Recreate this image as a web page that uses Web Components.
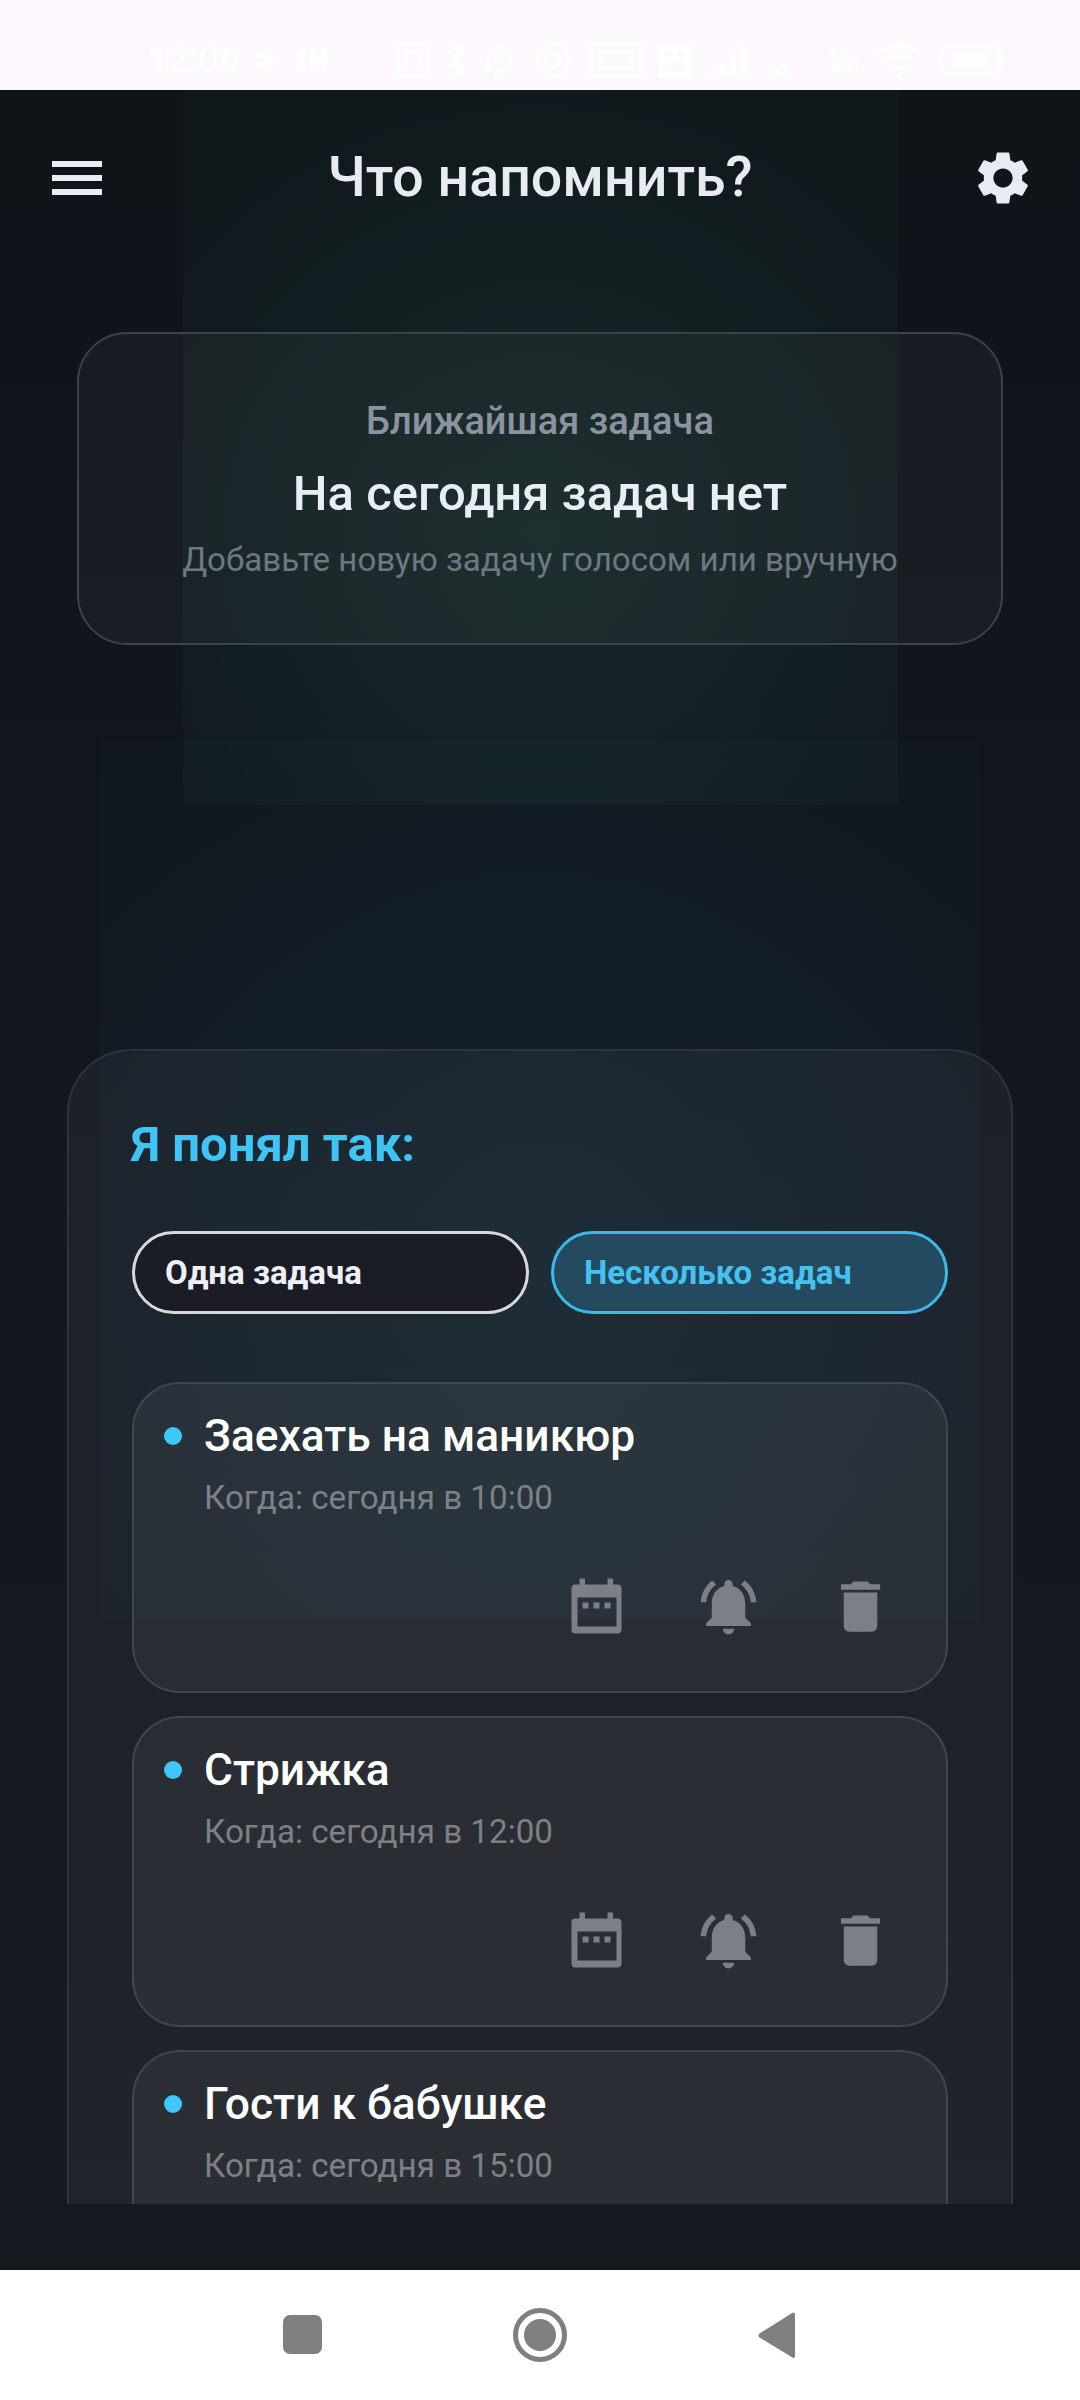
<!DOCTYPE html>
<html lang="ru">
<head>
<meta charset="utf-8">
<title>Что напомнить?</title>
<style>
  html, body { margin: 0; padding: 0; }
  body { width: 1080px; height: 2400px; overflow: hidden; font-family: Roboto, "Noto Sans", sans-serif; }
  app-screen { height: 2400px; }
</style>
</head>
<body>
<app-screen>
  <status-bar slot="status"></status-bar>
  <app-header title="Что напомнить?"></app-header>
  <next-task label="Ближайшая задача" title="На сегодня задач нет" hint="Добавьте новую задачу голосом или вручную"></next-task>
  <review-sheet heading="Я понял так:">
    <mode-pill slot="modes">Одна задача</mode-pill>
    <mode-pill slot="modes" selected>Несколько задач</mode-pill>
    <task-item title="Заехать на маникюр" when="Когда: сегодня в 10:00"></task-item>
    <task-item title="Стрижка" when="Когда: сегодня в 12:00"></task-item>
    <task-item title="Гости к бабушке" when="Когда: сегодня в 15:00"></task-item>
  </review-sheet>
  <nav-bar slot="nav"></nav-bar>
</app-screen>

<script>
// каркас экрана: фон со свечениями, контент, нижняя навигация
class AppScreen extends HTMLElement {
  connectedCallback() {
    this.attachShadow({ mode: 'open' }).innerHTML = `
      <style>
        :host { display: flex; flex-direction: column; width: 1080px; }
        .app {
          height: 2180px;
          color: #e8ebf2;
          background:
            radial-gradient(circle farthest-corner at 50% 62%, rgba(26,64,56,.44), rgba(26,64,56,.27) 48%, rgba(26,64,56,.17) 65%, rgba(26,64,56,.1) 80%) 183px 0 / 715px 715px no-repeat,
            radial-gradient(circle farthest-corner at 50% 60%, rgba(20,70,85,.27), rgba(20,70,85,.14) 51%, rgba(20,70,85,.05) 80%, rgba(20,70,85,.03)) 100px 650px / 880px 880px no-repeat,
            linear-gradient(#0f1419, #12161e 40%, #151a21);
        }
      </style>
      <slot name="status"></slot>
      <div class="app"><slot></slot></div>
      <slot name="nav"></slot>`;
  }
}

class StatusBar extends HTMLElement {
  connectedCallback() {
    this.attachShadow({ mode: 'open' }).innerHTML = `
      <style>
        :host {
          display: flex; align-items: center; box-sizing: border-box;
          height: 90px; padding: 30px 75px 0 148px;
          background: #fdf7fe; color: #fff;
          font: 500 36px Roboto, sans-serif;
        }
        .left, .right { display: flex; align-items: center; }
        .left { gap: 16px; flex: 1; }
        .right { gap: 17px; }
        svg { display: block; }
        .small { font-size: 15px; font-weight: 700; line-height: 16px; }
      </style>
      <div class="left">
        <span>12:06</span>
        <svg width="26" height="26" viewBox="0 0 24 24" fill="#fff"><path d="M2 21 23 12 2 3v7l15 2-15 2z"/></svg>
        <svg width="36" height="26" viewBox="0 0 36 26" fill="#fff"><path d="M0 2h8v22H0zM12 2h4l5 10 5-10h4v22h-5V12l-4 8-4-8v12h-5z"/></svg>
      </div>
      <div class="right">
        <svg width="34" height="36" viewBox="0 0 34 36" fill="none" stroke="#fff" stroke-width="3"><rect x="2" y="2" width="30" height="32" rx="3"/><path d="M10 26V10h14v16"/></svg>
        <svg width="18" height="36" viewBox="0 0 18 36" fill="none" stroke="#fff" stroke-width="3"><path d="M2 10l14 16-7 7V3l7 7L2 26"/></svg>
        <svg width="34" height="36" viewBox="0 0 34 36" fill="none" stroke="#fff" stroke-width="3"><path d="M6 28V16a11 11 0 0 1 22 0v12zM3 30 31 4M13 33h8"/></svg>
        <svg width="40" height="38" viewBox="0 0 40 38" fill="none" stroke="#fff" stroke-width="3.5"><circle cx="20" cy="19" r="16"/><circle cx="20" cy="19" r="7"/></svg>
        <svg width="52" height="36" viewBox="0 0 52 36" fill="none" stroke="#fff" stroke-width="4"><rect x="2" y="2" width="48" height="32"/><rect x="10" y="10" width="32" height="16"/></svg>
        <svg width="32" height="36" viewBox="0 0 32 36" fill="#fff"><path d="M0 3h32v33H0zM6 9v6h8V9zm12 0v6h8V9zM6 21v9h20v-9z" fill-rule="evenodd"/></svg>
        <svg width="40" height="32" viewBox="0 0 40 32" fill="#fff"><path d="M2 26h6v6H2zM12 20h6v12h-6zM22 10h6v22h-6zM32 2h6v30h-6z"/></svg>
        <svg width="16" height="12" viewBox="0 0 16 12" fill="#fff" style="margin:20px 24px 0 8px"><path d="M0 4h6v8H0zM9 0h6v12H9z"/></svg>
        <div class="small">Vo<br>WiFi</div>
        <svg width="46" height="38" viewBox="0 0 46 38" fill="none" stroke="#fff" stroke-width="4"><path d="M2 13a30 30 0 0 1 42 0M9 21a20 20 0 0 1 28 0M16 29a10 10 0 0 1 14 0"/><circle cx="23" cy="35" r="3" fill="#fff" stroke="none"/></svg>
        <svg width="66" height="32" viewBox="0 0 66 32" fill="none" stroke="#fff" stroke-width="3"><rect x="2" y="2" width="58" height="28" rx="7"/><path d="M63 11v10"/><rect x="14" y="9" width="34" height="14" fill="#fff" stroke="none"/></svg>
      </div>`;
  }
}

class AppHeader extends HTMLElement {
  connectedCallback() {
    this.attachShadow({ mode: 'open' }).innerHTML = `
      <style>
        :host {
          display: grid; grid-template-columns: 1fr auto 1fr; align-items: center;
          box-sizing: border-box; height: 176px; padding: 0 45px 0 52px;
          color: #e8ebf3;
        }
        .burger { display: flex; flex-direction: column; gap: 8px; width: 50px; }
        .burger i { display: block; height: 6px; background: currentColor; }
        h1 { margin: 0; font: 500 55.500px/60px Roboto, sans-serif; transform: translateX(-3.500px); }
        svg { display: block; fill: currentColor; justify-self: end; }
      </style>
      <div class="burger"><i></i><i></i><i></i></div>
      <h1>${this.getAttribute('title')}</h1>
      <svg width="64" height="64" viewBox="0 0 24 24"><path d="M19.14 12.94c.04-.3.06-.61.06-.94 0-.32-.02-.64-.07-.94l2.03-1.58c.18-.14.23-.41.12-.61l-1.92-3.32c-.12-.22-.37-.29-.59-.22l-2.39.96c-.5-.38-1.03-.7-1.62-.94l-.36-2.54c-.04-.24-.24-.41-.48-.41h-3.84c-.24 0-.43.17-.47.41l-.36 2.54c-.59.24-1.13.57-1.62.94l-2.39-.96c-.22-.08-.47 0-.59.22L2.74 8.87c-.12.21-.08.47.12.61l2.03 1.58c-.05.3-.09.63-.09.94s.02.64.07.94l-2.03 1.58c-.18.14-.23.41-.12.61l1.92 3.32c.12.22.37.29.59.22l2.39-.96c.5.38 1.03.7 1.62.94l.36 2.54c.05.24.24.41.48.41h3.84c.24 0 .44-.17.47-.41l.36-2.54c.59-.24 1.13-.56 1.62-.94l2.39.96c.22.08.47 0 .59-.22l1.92-3.32c.12-.22.07-.47-.12-.61l-2.01-1.58zM12 15.6c-1.98 0-3.6-1.62-3.6-3.6s1.62-3.6 3.6-3.6 3.6 1.62 3.6 3.6-1.62 3.6-3.6 3.6z"/></svg>`;
  }
}

class NextTask extends HTMLElement {
  connectedCallback() {
    this.attachShadow({ mode: 'open' }).innerHTML = `
      <style>
        :host {
          display: flex; flex-direction: column; align-items: center;
          box-sizing: border-box; height: 313px; margin: 66px 77px 0;
          padding-top: 65px;
          border: 2px solid #3b424d; border-radius: 50px;
          background: rgba(255,255,255,.035);
          text-align: center;
        }
        .label { font: 500 38px/44px Roboto, sans-serif; color: #8b93a3; }
        .title { font: 500 49px/56px Roboto, sans-serif; color: #e9edf4; margin-top: 23px; }
        .hint { font: 400 33.100px/40px Roboto, sans-serif; color: #6e7884; margin-top: 18px; }
      </style>
      <div class="label">${this.getAttribute('label')}</div>
      <div class="title">${this.getAttribute('title')}</div>
      <div class="hint">${this.getAttribute('hint')}</div>`;
  }
}

class ReviewSheet extends HTMLElement {
  connectedCallback() {
    this.attachShadow({ mode: 'open' }).innerHTML = `
      <style>
        :host {
          display: block; box-sizing: border-box; height: 1155px; margin: 404px 67px 0;
          padding: 0 63px;
          border: 2px solid #2e333c; border-bottom: 0; border-radius: 64px 64px 0 0;
          background: rgba(255,255,255,.042);
          overflow: hidden;
        }
        h2 { margin: 66px 0 0 -1px; font: 700 49px/56px Roboto, sans-serif; color: #3fc4f6; }
        .modes { display: grid; grid-template-columns: 397px 397px; gap: 22px; margin-top: 58px; }
        .list { display: flex; flex-direction: column; gap: 23px; margin-top: 68px; }
      </style>
      <h2>${this.getAttribute('heading')}</h2>
      <div class="modes"><slot name="modes"></slot></div>
      <div class="list"><slot></slot></div>`;
  }
}

class ModePill extends HTMLElement {
  connectedCallback() {
    const on = this.hasAttribute('selected');
    this.attachShadow({ mode: 'open' }).innerHTML = `
      <style>
        :host {
          display: flex; align-items: center; box-sizing: border-box; height: 83px;
          padding-left: 30px; border-radius: 42px;
          border: 3px solid ${on ? '#3db9e9' : '#d9d9d9'};
          background: ${on ? '#234a5e' : '#1a1d26'};
          color: ${on ? '#45c2f2' : '#eef0f6'};
          font: 700 33px Roboto, sans-serif;
        }
      </style><slot></slot>`;
  }
}

class TaskItem extends HTMLElement {
  connectedCallback() {
    this.attachShadow({ mode: 'open' }).innerHTML = `
      <style>
        :host {
          display: block; box-sizing: border-box; height: 311px;
          padding: 27px 52px 0 30px;
          border: 2px solid #41454e; border-radius: 48px;
          background: rgba(255,255,255,.055);
          color: #fff;
        }
        .head { display: flex; align-items: center; gap: 22px; }
        .dot { width: 18px; height: 18px; border-radius: 50%; background: #3fc6fa; flex: none; }
        .title { font: 500 44.300px/50px Roboto, sans-serif; }
        .when { font: 400 33.200px/40px Roboto, sans-serif; color: #7c8087; margin: 17px 0 0 40px; }
        .actions { display: flex; justify-content: flex-end; gap: 65px; margin-top: 55px; color: #7c7f85; }
        svg { display: block; fill: currentColor; width: 67px; height: 67px; }
      </style>
      <div class="head"><span class="dot"></span><span class="title">${this.getAttribute('title')}</span></div>
      <div class="when">${this.getAttribute('when')}</div>
      <div class="actions">
        <svg viewBox="0 0 67 67"><path fill-rule="evenodd" d="M16.500 5.500H22v6h22.500v-6H50v6h4.500a4 4 0 0 1 4 4v41a4 4 0 0 1-4 4h-42a4 4 0 0 1-4-4v-41a4 4 0 0 1 4-4h4zM14.500 24.500v29h39v-29zM19.500 29.500h6v6h-6zM30.500 29.500h6v6h-6zM41.500 29.500h6v6h-6z"/></svg>
        <svg viewBox="0 0 24 24"><path d="M7.580 4.080L6.150 2.650C3.750 4.480 2.170 7.300 2.030 10.500h2c.15-2.650 1.510-4.970 3.550-6.420zm12.390 6.420h2c-.15-3.200-1.730-6.020-4.120-7.850l-1.420 1.430c2.020 1.450 3.390 3.770 3.540 6.420zM18 11c0-3.070-1.640-5.640-4.500-6.320V4c0-.83-.67-1.500-1.500-1.500s-1.500.67-1.500 1.500v.68C7.630 5.360 6 7.920 6 11v5l-2 2v1h16v-1l-2-2v-5zm-6 11c.14 0 .27-.01.4-.04.65-.14 1.180-.58 1.440-1.180.1-.24.15-.5.15-.78h-4c.01 1.100.9 2 2.010 2z"/></svg>
        <svg viewBox="0 0 24 24"><path d="M6 19c0 1.100.9 2 2 2h8c1.100 0 2-.9 2-2V7H6v12zM19 4h-3.500l-1-1h-5l-1 1H5v2h14V4z"/></svg>
      </div>`;
  }
}

class NavBar extends HTMLElement {
  connectedCallback() {
    this.attachShadow({ mode: 'open' }).innerHTML = `
      <style>
        :host { display: block; background: #fff; height: 130px; }
        svg { display: block; }
      </style>
      <svg width="1080" height="130" viewBox="0 2270 1080 130" fill="#7f7f7f">
        <rect x="283" y="2315" width="39" height="39" rx="7"/>
        <circle cx="540" cy="2335" r="24.500" fill="none" stroke="#7f7f7f" stroke-width="5"/>
        <circle cx="540" cy="2335" r="16"/>
        <path d="M793 2312.500c1.500 0 2 1 2 2.500v41c0 1.500-1 2.500-2.500 1.500l-33-20c-1.500-1-1.500-3 0-4z"/>
      </svg>`;
  }
}

customElements.define('app-screen', AppScreen);
customElements.define('status-bar', StatusBar);
customElements.define('app-header', AppHeader);
customElements.define('next-task', NextTask);
customElements.define('review-sheet', ReviewSheet);
customElements.define('mode-pill', ModePill);
customElements.define('task-item', TaskItem);
customElements.define('nav-bar', NavBar);
</script>
</body>
</html>
